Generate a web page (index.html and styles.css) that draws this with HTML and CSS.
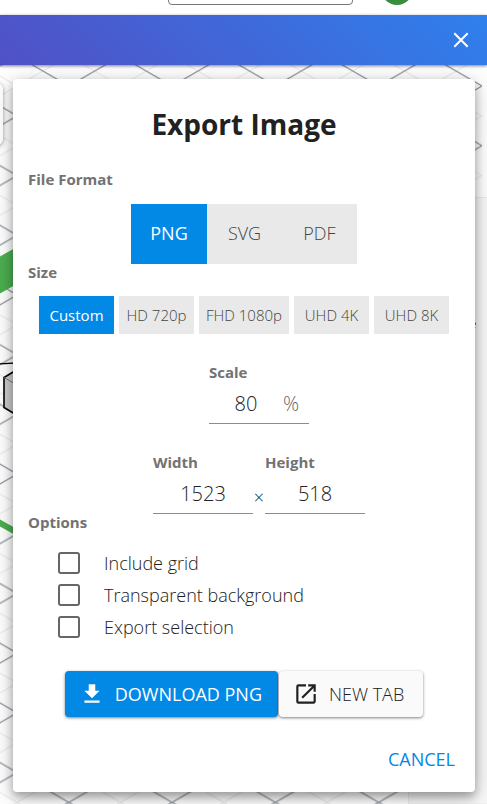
FILE: index.html
```html
<!DOCTYPE html>
<html lang="en">
<head>
<meta charset="utf-8">
<meta name="viewport" content="width=device-width, initial-scale=1">
<title>Export Image</title>
<link rel="stylesheet" href="styles.css">
</head>
<body>
<header class="topbar">
  <input class="search" type="text" aria-label="Search">
  <span class="avatar"></span>
</header>
<div class="banner">
  <button class="close" type="button" aria-label="Close">
    <svg width="16" height="16" viewBox="0 0 16 16"><path d="M1.300 1.300 14.700 14.700M14.700 1.300 1.300 14.700" fill="none" stroke="#fff" stroke-width="2"/></svg>
  </button>
</div>
<main class="workspace">
  <svg class="scene" aria-hidden="true">
    <defs>
      <pattern id="grid" width="103.300" height="59.700" patternUnits="userSpaceOnUse" patternTransform="translate(68.800 21)">
        <path d="M0 29.850 51.650 0 103.300 29.850 51.650 59.700Z" fill="none" stroke="#e9eaeb" stroke-width="1"/>
        <path d="M0 0 103.300 59.700M0 59.700 103.300 0" fill="none" stroke="#9299a2" stroke-width="1.300"/>
      </pattern>
    </defs>
    <rect width="482" height="100%" fill="url(#grid)"/>
    <path d="M-1 192 24 178V215L-1 229ZM-1 454 24 468V475L-1 461Z" fill="#4caf50"/>
    <path d="M-1 299 24 297.500" fill="none" stroke="#000" stroke-width="1.300"/>
    <path d="M24 300.500 4 312.500V342.500L24 354.500" fill="#ccc" stroke="#000" stroke-width="1.600"/>
    <path d="M4 312.500 24 324" fill="none" stroke="#777" stroke-width="1"/>
    <rect x="-20" y="18" width="23" height="62" rx="6" class="tool-panel"/>
    <path d="M408.500 739V700H460V132.500H488V739Z" fill="#f8f8f8" stroke="#ececec"/>
    <text x="469" y="263" class="panel-text">e</text>
  </svg>
  <form class="dialog">
    <h1 class="title">Export Image</h1>
    <h2 class="section">File Format</h2>
    <div class="formats">
      <button class="format selected" type="button">PNG</button>
      <button class="format" type="button">SVG</button>
      <button class="format" type="button">PDF</button>
    </div>
    <h2 class="section">Size</h2>
    <div class="sizes">
      <button class="size selected" type="button">Custom</button>
      <button class="size" type="button">HD 720p</button>
      <button class="size wide" type="button">FHD 1080p</button>
      <button class="size" type="button">UHD 4K</button>
      <button class="size" type="button">UHD 8K</button>
    </div>
    <div class="fields">
      <div class="field">
        <label class="label" for="scale">Scale</label>
        <div class="entry"><input id="scale" type="text" value="80"><span class="unit">%</span></div>
      </div>
    </div>
    <div class="fields">
      <div class="field">
        <label class="label" for="width">Width</label>
        <div class="entry"><input id="width" type="text" value="1523"></div>
      </div>
      <span class="times">×</span>
      <div class="field">
        <label class="label" for="height">Height</label>
        <div class="entry"><input id="height" type="text" value="518"></div>
      </div>
    </div>
    <h2 class="section options-title">Options</h2>
    <div class="options">
      <label class="option"><input type="checkbox">Include grid</label>
      <label class="option"><input type="checkbox">Transparent background</label>
      <label class="option"><input type="checkbox">Export selection</label>
    </div>
    <div class="actions">
      <button class="action primary" type="button">
        <svg width="26" height="26" viewBox="0 0 24 24"><path d="M19 9h-4V3H9v6H5l7 7 7-7zM5 18v2h14v-2H5z" fill="currentColor"/></svg>
        DOWNLOAD PNG
      </button>
      <button class="action" type="button">
        <svg width="26" height="26" viewBox="0 0 24 24"><path d="M19 19H5V5h7V3H5a2 2 0 0 0-2 2v14a2 2 0 0 0 2 2h14c1.100 0 2-.9 2-2v-7h-2v7zM14 3v2h3.590l-9.830 9.830 1.410 1.410L19 6.410V10h2V3h-7z" fill="currentColor"/></svg>
        NEW TAB
      </button>
    </div>
    <div class="footer"><button class="cancel" type="button">CANCEL</button></div>
  </form>
</main>
</body>
</html>
```
FILE: styles.css
```css
* { box-sizing: border-box; }
body {
  margin: 0;
  min-height: 100vh;
  display: flex;
  flex-direction: column;
  background: #fff;
  color: #212121;
  font-family: "Open Sans", sans-serif;
  font-weight: 300;
}
button, input { font: inherit; color: inherit; border: 0; padding: 0; margin: 0; background: none; }
svg { display: block; flex: none; }

.topbar {
  height: 15px;
  padding: 0 74px 10px;
  display: flex;
  justify-content: flex-end;
  align-items: flex-end;
  gap: 28px;
  overflow: hidden;
}
.search { width: 185px; height: 36px; border: 1px solid #777; border-radius: 4px; }
.avatar { width: 32px; height: 32px; border-radius: 50%; background: #388e3c; }

.banner {
  position: relative;
  z-index: 1;
  height: 50px;
  padding: 0 18px;
  display: flex;
  justify-content: flex-end;
  align-items: center;
  background: linear-gradient(45deg, #5150c5, #2f80ed);
  box-shadow: 0 1px 3px rgba(0, 0, 0, .5);
}

.workspace { position: relative; flex: 1; padding: 14px 12px 12px 13px; overflow: hidden; }
.scene { position: absolute; inset: 0; width: 100%; height: 100%; }
.tool-panel { fill: #fff; filter: drop-shadow(0 1px 2px rgba(0, 0, 0, .4)); }
.panel-text { font-size: 13px; font-weight: 400; fill: #333; }

.dialog {
  position: relative;
  padding: 23px 15px 15px;
  background: #fff;
  border-radius: 4px;
  box-shadow: 0 5px 10px rgba(0, 0, 0, .3), 0 4px 24px rgba(0, 0, 0, .2);
}
.title { margin: 0 0 25px; font-size: 28px; line-height: 44px; font-weight: 700; text-align: center; }
.section, .label { margin: 0; font-size: 15px; line-height: 16px; font-weight: 700; color: #727272; }

.formats { display: flex; justify-content: center; margin: 17px 0 0; }
.format { width: 75px; height: 60px; padding-bottom: 2px; font-size: 18px; background: #e9e9e9; color: #444; }
.format.selected { width: 76px; }
.sizes { display: flex; justify-content: center; gap: 5px; margin: 16px 0 30px; }
.size { width: 75px; height: 38px; font-size: 15px; white-space: nowrap; background: #e9e9e9; color: #444; }
.size.wide { width: 90px; }
.format.selected, .size.selected { background: #0288e5; color: #fff; font-weight: 400; }

.fields { display: flex; justify-content: center; align-items: flex-end; margin: 0 0 30px 30px; }
.fields + .options-title { margin-top: -30px; }
.field { width: 100px; }
.label { display: block; margin-bottom: 2px; }
.entry { display: flex; align-items: center; height: 42px; padding-top: 2px; border-bottom: 1px solid #8c8c8c; }
.entry input { flex: 1; min-width: 0; height: 38px; font-size: 20px; text-align: center; outline: 0; }
.unit { width: 26px; font-size: 20px; color: #666; }
.times { width: 12px; font-size: 18px; line-height: 34px; text-align: center; }

.options { display: flex; flex-direction: column; margin: 17px 30px 0; }
.option { display: flex; align-items: center; gap: 24px; height: 32px; padding-bottom: 1px; font-size: 18px; }
.option input { appearance: none; width: 22px; height: 22px; border: 2px solid #666; border-radius: 3px; }

.actions { display: flex; justify-content: center; gap: 1px; margin-top: 28px; }
.action {
  display: flex;
  align-items: center;
  gap: 10px;
  height: 46px;
  padding: 0 19px 0 14px;
  font-size: 18px;
  white-space: nowrap;
  border-radius: 4px;
  background: #fafafa;
  box-shadow: 0 1px 3px rgba(0, 0, 0, .5);
}
.primary { padding-right: 16px; background: #0288e5; color: #fff; font-weight: 400; }
.footer { display: flex; justify-content: flex-end; margin-top: 24px; padding: 0 5px; }
.cancel { height: 36px; font-size: 18px; font-weight: 400; color: #0288e5; }
```
